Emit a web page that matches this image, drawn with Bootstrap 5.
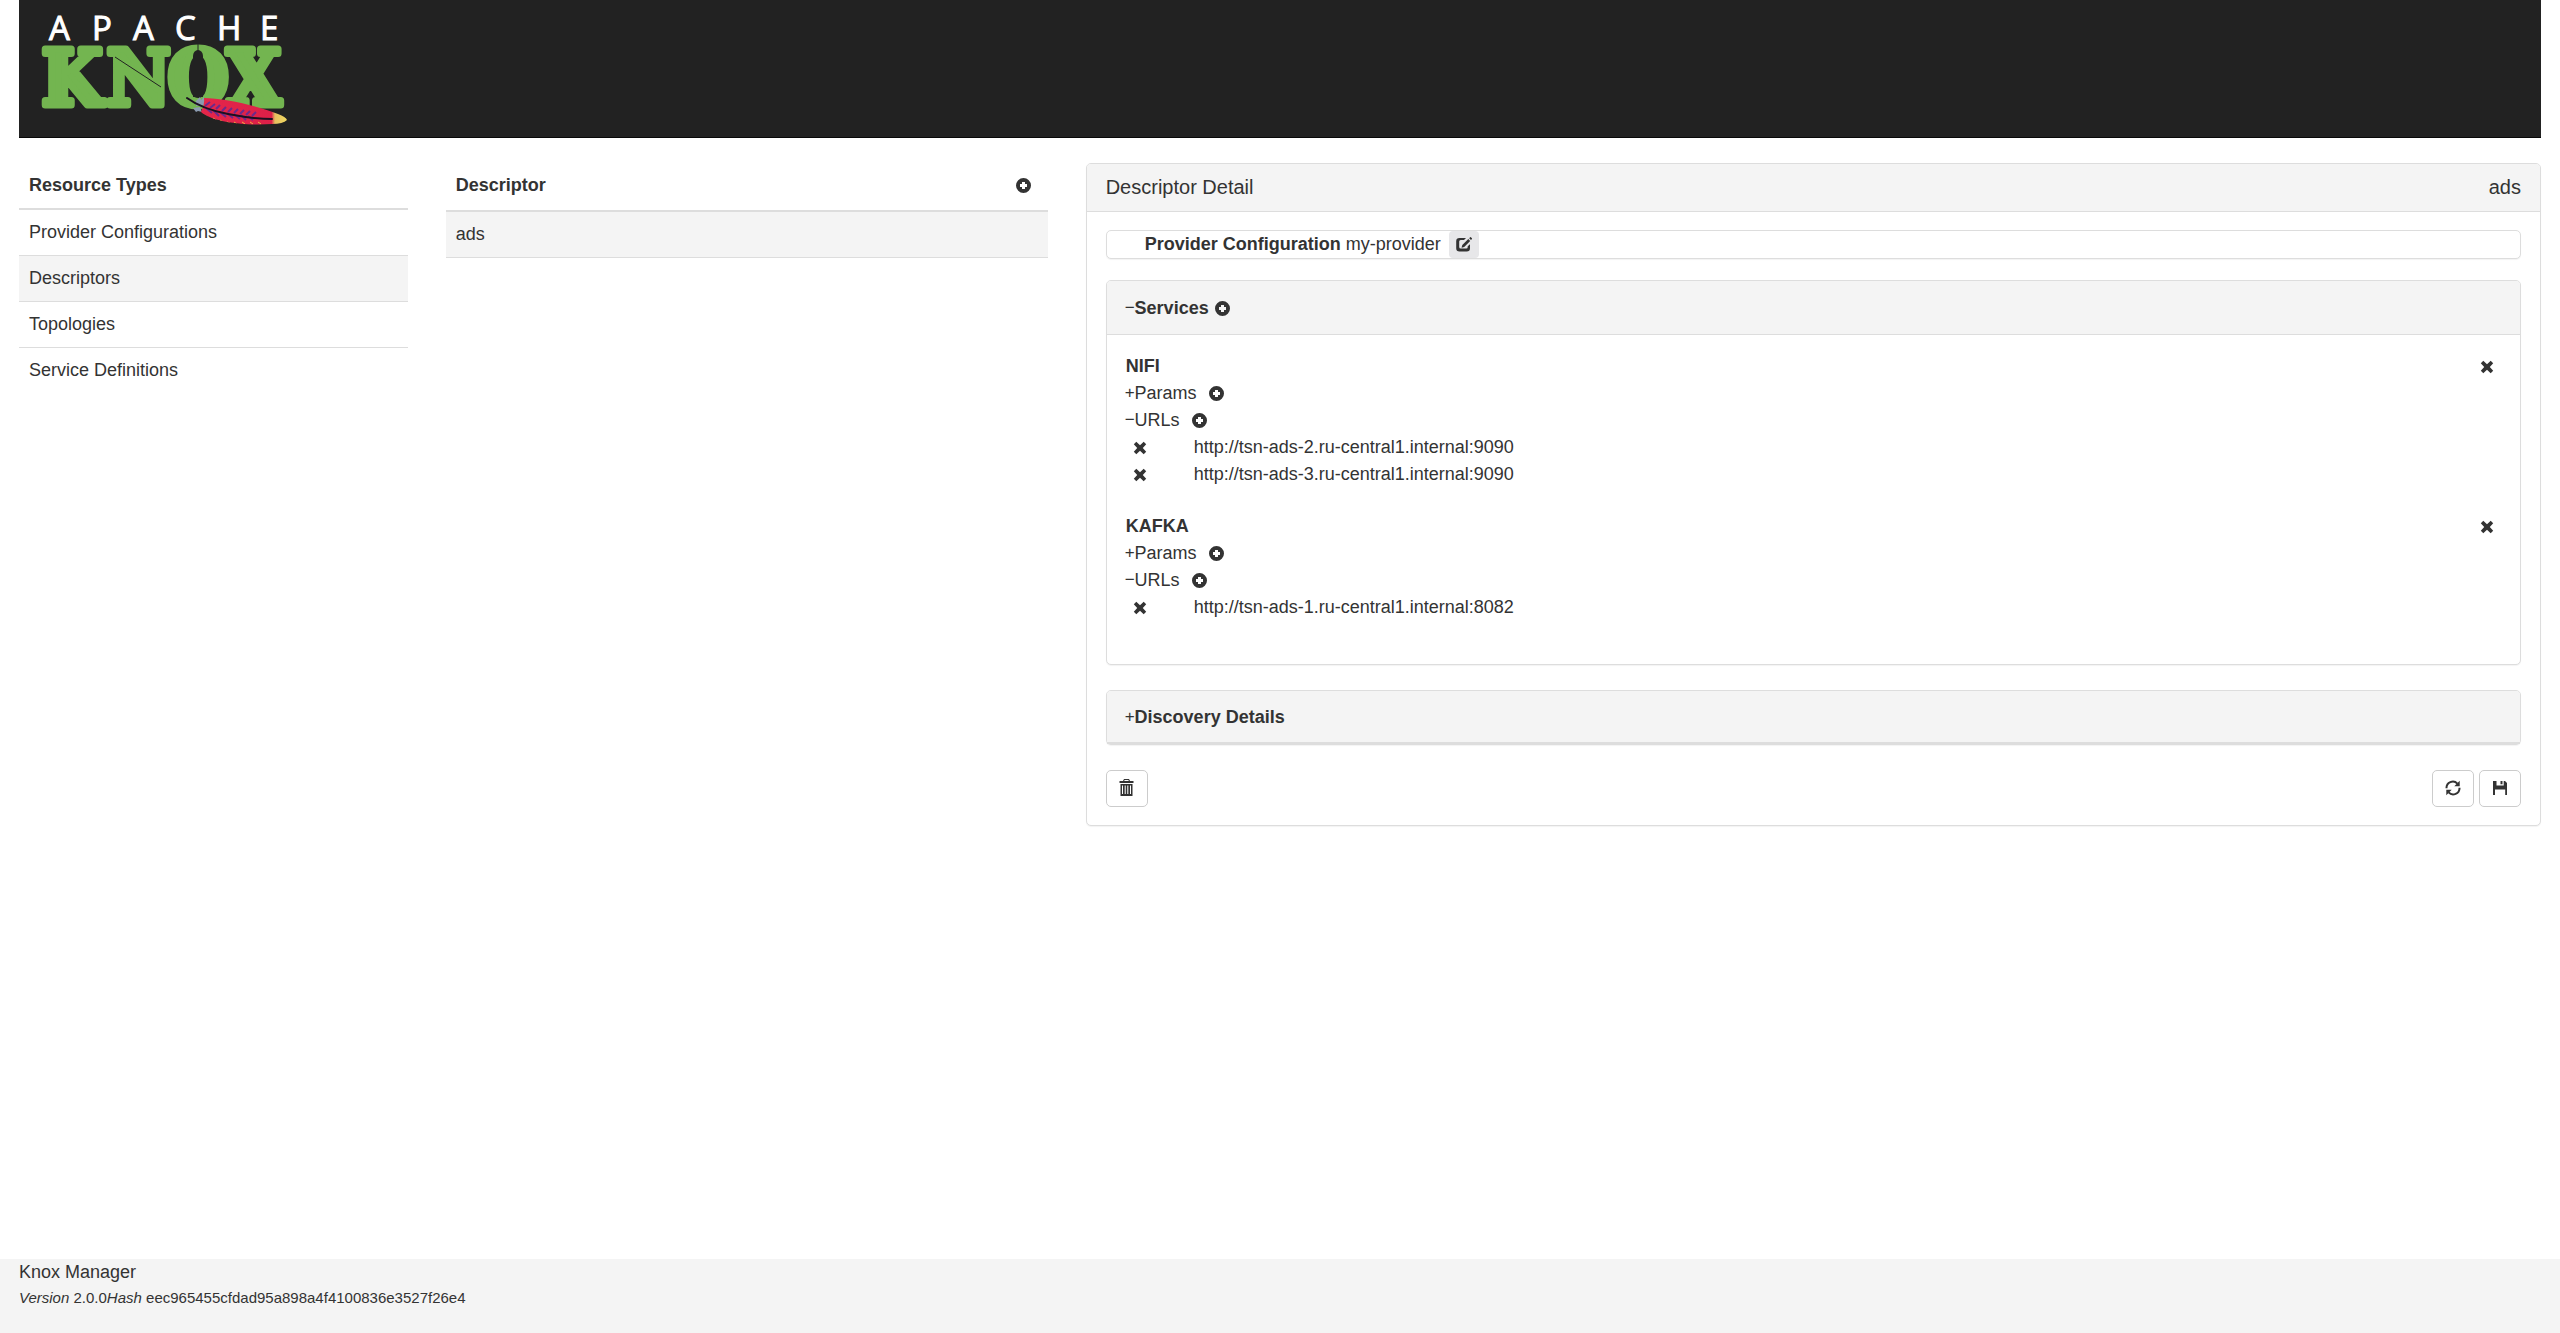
<!DOCTYPE html>
<html lang="en">
<head>
<meta charset="utf-8">
<meta name="viewport" content="width=device-width, initial-scale=1">
<title>Knox Manager</title>
<link href="https://cdn.jsdelivr.net/npm/bootstrap@5.3.0/dist/css/bootstrap.min.css" rel="stylesheet">
<style>
  body { font: 18px/25px "Liberation Sans", Arial, sans-serif; color: #333; background: #fff; }
  a { color: inherit; text-decoration: none; }
  .page-x { padding-left: 19px; padding-right: 19px; }
  .brand-bar { background: #222; border-bottom: 1px solid #080808; }
  .brand-link { margin-left: 19px; }
  .main-row { --bs-gutter-x: 38px; margin-top: 25px; }
  .res-table { --bs-table-color: #333; --bs-table-bg: transparent; margin: 0; border-color: #ddd; }
  .res-table th, .res-table td { padding: 10px; border-bottom: 1px solid #ddd; vertical-align: middle; }
  .res-table thead th { border-bottom: 2px solid #ddd; }
  .list-table thead th { padding-bottom: 12px; }
  .nav-table tbody tr:last-child td { border-bottom: 0; }
  .res-table .picked td { background: #f4f4f4; }
  .panel-box { --bs-card-border-color: #ddd; --bs-card-border-radius: 5px; --bs-card-inner-border-radius: 4px; --bs-card-cap-bg: #f4f4f4; --bs-card-color: #333; box-shadow: 0 1px 1px rgba(0,0,0,.05); color: #333; }
  .panel-box > .card-header { padding: 0 19px; border-bottom: 1px solid #ddd; }
  .panel-box > .card-body { padding: 18px 19px; }
  .title-head { font-size: 20px; line-height: 47px; }
  .panel-box > .inner-head { padding-top: 2px; line-height: 51px; }
  .cfg-box { padding-left: 38px; line-height: 27px; margin-bottom: 21px; }
  .gap-below { margin-bottom: 25px; }
  .closed > .card-header { border-bottom: 2px solid #ddd; line-height: 49px; }
  .sign { font-size: 17px; line-height: 1; font-weight: 400; margin-left: -1px; vertical-align: 1px; }
  .line { line-height: 27px; min-height: 27px; }
  .ico-btn { background: none; border: 0; padding: 0; color: #333; line-height: 1; display: inline-flex; }
  .edit-btn { background: #e7e7e9; border-radius: 4px; padding: 6px 7px; margin-left: 8px; }
  .plus-params { margin-left: 12px; }
  .plus-head { margin-left: 6px; }
  .url-del { margin-left: 7px; width: 61px; }
  .row-del { margin-right: 7px; }
  .tool-btn { --bs-btn-border-color: #ccc; --bs-btn-color: #333; --bs-btn-bg: #fff; --bs-btn-border-radius: 5px; width: 42px; height: 37px; padding: 0 0 2px; display: flex; align-items: center; justify-content: center; }
  .tools { gap: 5px; }
  .foot { background: #f4f4f4; padding-bottom: 23px; padding-top: 1px; }
  .foot small { font-size: 15px; }
  svg { display: block; flex: none; }
</style>
<script src="https://cdn.jsdelivr.net/npm/bootstrap@5.3.0/dist/js/bootstrap.bundle.min.js"></script>
</head>
<body class="d-flex flex-column min-vh-100">
<svg width="0" height="0" class="position-absolute" aria-hidden="true">
  <symbol id="i-plus" viewBox="0 0 15 15"><path fill="currentColor" fill-rule="evenodd" d="M7.500 0a7.500 7.500 0 1 1 0 15a7.500 7.500 0 0 1 0-15zM6 4v2H4v3h2v2h3V9h2V6H9V4z"/></symbol>
  <symbol id="i-x" viewBox="0 0 14 14"><path fill="currentColor" d="M3.300.8 7 4.300 10.700.8 13.200 3.300 9.800 7l3.400 3.700-2.500 2.500L7 9.700l-3.700 3.500L.8 10.700 4.200 7 .8 3.300z"/></symbol>
  <symbol id="i-edit" viewBox="0 0 16 15"><path fill="currentColor" d="M3.500 1H10L8 3H4.700A1.500 1.500 0 0 0 3.200 4.500v5.500A1.500 1.500 0 0 0 4.700 11.500h5.500a1.500 1.500 0 0 0 1.500-1.500V9.300l2.300-2v3.900a3.300 3.300 0 0 1-3.300 3.300H3.500A3.300 3.300 0 0 1 .2 11.200V4.300A3.300 3.300 0 0 1 3.500 1zM12.300 2.100l1.900 1.900-6 6-2.700.8.800-2.700zM13.200 1.200l.9-.9a.6.6 0 0 1 .8 0l1 1a.6.6 0 0 1 0 .8l-.9.9z"/></symbol>
  <symbol id="i-trash" viewBox="0 0 15 17"><path fill="currentColor" fill-rule="evenodd" d="M5 0h5l1 2h3.500v2H.5V2H4zM5.600 1l-.4 1h4.600l-.4-1zM1.500 5h12v12h-12zM3 6.500V15h1V6.500zM5.700 6.500V15h1V6.500zM8.300 6.500V15h1V6.500zM11 6.500V15h1V6.500z"/></symbol>
  <symbol id="i-refresh" viewBox="0 0 16 16"><path fill="none" stroke="currentColor" stroke-width="2" d="M1.500 8.200A6.300 6.300 0 0 1 12.400 3.600M14.500 7.800A6.300 6.300 0 0 1 3.600 12.400"/><path fill="currentColor" d="M14.700.8v5.400H9.300zM1.300 15.200V9.800h5.400z"/></symbol>
  <symbol id="i-save" viewBox="0 0 14 14"><path fill="currentColor" fill-rule="evenodd" d="M0 0h3.500v4.500h7.200V0H12l2 2v12h-1.800V8.500H2V14H0zM7.500 0h2v3.200h-2z"/></symbol>
</svg>

<header class="page-x">
  <nav class="brand-bar">
    <a href="#" class="brand-link d-inline-block align-top" aria-label="Apache Knox">
      <svg width="256" height="137" viewBox="38 0 256 137">
        <defs>
          <linearGradient id="plume" x1="0" x2="1"><stop offset="0" stop-color="#e5264a"/><stop offset=".82" stop-color="#dc2048"/><stop offset=".86" stop-color="#e6c060"/><stop offset="1" stop-color="#f0d860"/></linearGradient>
          <clipPath id="plumeclip"><path d="M204 98C224 98 262 107 278 114Q286 117 287 120Q283 124 272 124C246 126 212 122 201 112Q205 105 204 98z"/></clipPath>
        </defs>
        <text fill="#fff" stroke="#fff" stroke-width="1" font-family="Open Sans, Noto Sans, sans-serif" font-size="33" y="40" x="49 92 133 175 217 260">APACHE</text>
        <text fill="#73b550" stroke="#73b550" stroke-width="7" stroke-linejoin="round" font-family="DejaVu Serif Condensed, DejaVu Serif, serif" font-weight="700" font-size="77" y="105" x="42 107 168 227">KNOX</text>
        <path fill="#222" d="M193 97V56a5 6 0 0 1 10 0V97z"/>
        <path stroke="#222" fill="none" d="M115 57l46 30M198 42v14"/>
        <path fill="#8b9bb0" d="M196 101l4-4 1 3 3-3v8l-8 1zM193 108l7-1 2 5-4-1-2 1z"/>
        <path fill="url(#plume)" d="M204 98C224 98 262 107 278 114Q286 117 287 120Q283 124 272 124C246 126 212 122 201 112Q205 105 204 98z"/>
        <g clip-path="url(#plumeclip)">
          <path fill="none" stroke="#6b2a8c" stroke-width="2" d="M205 106l5-4M210 108l5-4M216 109l4-4M222 111l4-4M228 112l4-4M234 113l4-4M240 114l4-4M246 115l4-4M252 116l4-4M206 108l6 5M213 110l6 6M220 112l6 5M227 113l6 5M234 114l6 5M241 115l5 5M248 116l5 4"/>
          <path fill="none" stroke="#edb03c" stroke-width="1" d="M206 116l3 2M213 118l3 2M220 120l3 2M227 122l3 1M234 122l3 2M242 122l3 2M250 122l3 2M258 122l3 2"/>
        </g>
        <path fill="none" stroke="#1a1020" stroke-width="2" stroke-linecap="round" d="M187 98Q202 109 228 114T272 119"/>
      </svg>
    </a>
  </nav>
</header>

<main class="page-x flex-grow-1">
  <div class="row main-row">
    <div class="col-2">
      <table class="table res-table nav-table">
        <thead><tr><th scope="col">Resource Types</th></tr></thead>
        <tbody>
          <tr><td><a href="#">Provider Configurations</a></td></tr>
          <tr class="picked"><td><a href="#">Descriptors</a></td></tr>
          <tr><td><a href="#">Topologies</a></td></tr>
          <tr><td><a href="#">Service Definitions</a></td></tr>
        </tbody>
      </table>
    </div>
    <div class="col-3">
      <table class="table res-table list-table">
        <thead><tr><th scope="col"><div class="d-flex align-items-center justify-content-between">Descriptor
          <button type="button" class="ico-btn row-del" aria-label="Add descriptor"><svg width="15" height="15"><use href="#i-plus"/></svg></button></div></th></tr></thead>
        <tbody><tr class="picked"><td><a href="#">ads</a></td></tr></tbody>
      </table>
    </div>
    <div class="col-7">
      <section class="card panel-box">
        <div class="card-header title-head d-flex justify-content-between"><span>Descriptor Detail</span><span>ads</span></div>
        <div class="card-body">
          <div class="card panel-box cfg-box">
            <div class="d-flex align-items-center"><span><b>Provider Configuration</b> my-provider</span>
              <button type="button" class="ico-btn edit-btn" aria-label="Edit provider configuration"><svg width="16" height="15"><use href="#i-edit"/></svg></button></div>
          </div>

          <div class="card panel-box gap-below">
            <div class="card-header inner-head d-flex align-items-center"><a href="#"><span class="sign">−</span><b>Services</b></a>
              <button type="button" class="ico-btn plus-head" aria-label="Add service"><svg width="15" height="15"><use href="#i-plus"/></svg></button></div>
            <div class="card-body">
              <div class="gap-below">
                <div class="line d-flex align-items-center justify-content-between"><b>NIFI</b><button type="button" class="ico-btn row-del" aria-label="Remove NIFI"><svg width="14" height="14"><use href="#i-x"/></svg></button></div>
                <div class="line d-flex align-items-center"><a href="#"><span class="sign">+</span>Params</a><button type="button" class="ico-btn plus-params" aria-label="Add param"><svg width="15" height="15"><use href="#i-plus"/></svg></button></div>
                <div class="line d-flex align-items-center"><a href="#"><span class="sign">−</span>URLs</a><button type="button" class="ico-btn plus-params" aria-label="Add URL"><svg width="15" height="15"><use href="#i-plus"/></svg></button></div>
                <div class="line d-flex align-items-center"><button type="button" class="ico-btn url-del" aria-label="Remove URL"><svg width="14" height="14"><use href="#i-x"/></svg></button><span>http://tsn-ads-2.ru-central1.internal:9090</span></div>
                <div class="line d-flex align-items-center"><button type="button" class="ico-btn url-del" aria-label="Remove URL"><svg width="14" height="14"><use href="#i-x"/></svg></button><span>http://tsn-ads-3.ru-central1.internal:9090</span></div>
              </div>
              <div class="gap-below">
                <div class="line d-flex align-items-center justify-content-between"><b>KAFKA</b><button type="button" class="ico-btn row-del" aria-label="Remove KAFKA"><svg width="14" height="14"><use href="#i-x"/></svg></button></div>
                <div class="line d-flex align-items-center"><a href="#"><span class="sign">+</span>Params</a><button type="button" class="ico-btn plus-params" aria-label="Add param"><svg width="15" height="15"><use href="#i-plus"/></svg></button></div>
                <div class="line d-flex align-items-center"><a href="#"><span class="sign">−</span>URLs</a><button type="button" class="ico-btn plus-params" aria-label="Add URL"><svg width="15" height="15"><use href="#i-plus"/></svg></button></div>
                <div class="line d-flex align-items-center"><button type="button" class="ico-btn url-del" aria-label="Remove URL"><svg width="14" height="14"><use href="#i-x"/></svg></button><span>http://tsn-ads-1.ru-central1.internal:8082</span></div>
              </div>
            </div>
          </div>

          <div class="card panel-box gap-below closed">
            <div class="card-header inner-head"><a href="#"><span class="sign">+</span><b>Discovery Details</b></a></div>
          </div>

          <div class="d-flex tools">
            <button type="button" class="btn tool-btn me-auto" aria-label="Delete"><svg width="15" height="17"><use href="#i-trash"/></svg></button>
            <button type="button" class="btn tool-btn" aria-label="Refresh"><svg width="16" height="16"><use href="#i-refresh"/></svg></button>
            <button type="button" class="btn tool-btn" aria-label="Save"><svg width="14" height="14"><use href="#i-save"/></svg></button>
          </div>
        </div>
      </section>
    </div>
  </div>
</main>

<footer class="foot page-x">
  <div>Knox Manager</div>
  <div><small class="d-block"><em>Version</em> 2.0.0<em>Hash</em> eec965455cfdad95a898a4f4100836e3527f26e4</small></div>
</footer>
</body>
</html>
